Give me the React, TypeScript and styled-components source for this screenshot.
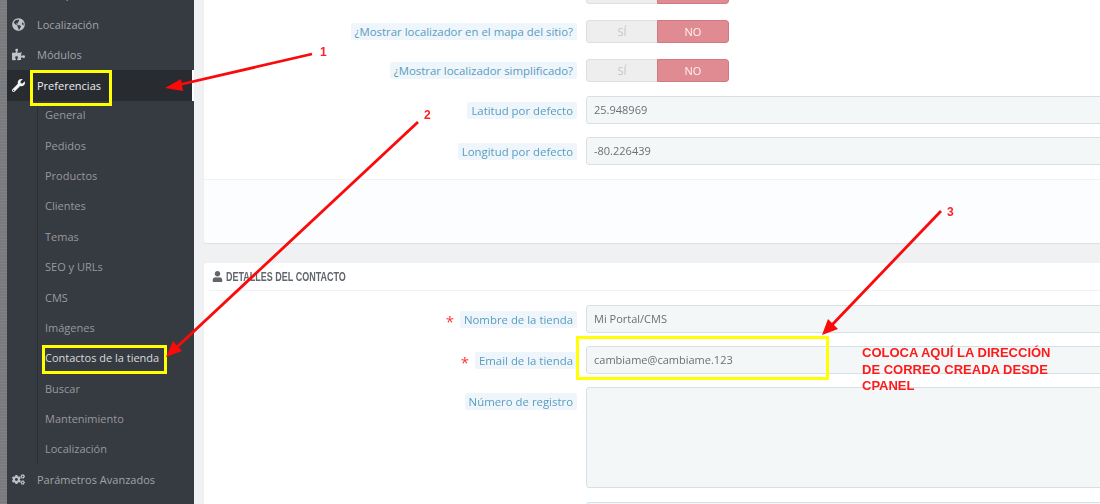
import React from 'react';
import styled, { createGlobalStyle } from 'styled-components';
import { FaCogs, FaGlobeAmericas, FaPuzzlePiece, FaTruck, FaUser, FaWrench } from 'react-icons/fa';

const Global = createGlobalStyle`
  html, body { margin: 0; padding: 0; width: 1100px; height: 504px; overflow: hidden; background: #eff1f2; }
  * { box-sizing: border-box; }
`;
const Page = styled.div`
  position: relative; display: flex; width: 1100px; height: 504px; overflow: hidden;
  font-family: "Open Sans", "Liberation Sans", sans-serif; font-size: 11px; filter: blur(0.45px);
`;
const Strip = styled.div`
  flex: 0 0 7px;
  background: repeating-linear-gradient(0deg, #7f8184 0 1px, #797b7e 1px 3px);
`;
const Sidebar = styled.nav`
  flex: 0 0 187px; background: #363a41; overflow: hidden; margin-right: 10px;
`;
const MainList = styled.div`
  margin-top: -21.5px; display: flex; flex-direction: column;
`;
const MenuItem = styled.div<{ $active?: boolean }>`
  position: relative; height: 30.5px; display: flex; align-items: center; gap: 0;
  background: ${p => (p.$active ? '#282b30' : 'transparent')};
  color: ${p => (p.$active ? '#eceef0' : '#a0a4a9')};
  ${p => p.$active && 'box-shadow: inset -2px 0 0 #fff;'}
`;
const IconBox = styled.span<{ $active?: boolean }>`
  flex: 0 0 30px; display: flex; justify-content: center; padding-right: 8px; font-size: 13px;
  color: ${p => (p.$active ? '#f4f4f4' : '#bfc2c6')};
`;
const SubList = styled.div`
  margin-left: 30px; padding-left: 7px; margin-top: -1px; border-left: 1px solid #2c2f35;
  display: flex; flex-direction: column; height: 365px;
`;
const SubItem = styled.div<{ $active?: boolean }>`
  flex: 0 0 30.4px; display: flex; align-items: center; white-space: nowrap;
  color: ${p => (p.$active ? '#d8dade' : '#96999e')};
`;
const Content = styled.main`
  flex: 1; min-width: 0; display: flex; flex-direction: column; gap: 20px;
`;
const Card = styled.section`
  background: #fff; margin-right: -20px; border-radius: 3px 0 0 3px;
  box-shadow: 0 1px 1px #dcdfe1;
`;
const TopCard = styled(Card)`
  margin-top: -20px; flex: 0 0 263px; display: flex; flex-direction: column;
`;
const TopFields = styled.div`
  flex: 1; display: flex; flex-direction: column; padding-top: 1px;
`;
const Footer = styled.div`
  flex: 0 0 64px; background: #fcfdfe; border-top: 1px solid #f1f3f5; border-radius: 0 0 0 3px;
`;
const ContactCard = styled(Card)`
  flex: 1; display: flex; flex-direction: column;
`;
const CardHeader = styled.h3`
  margin: 0 0 0 5px; height: 28px; display: flex; align-items: center; gap: 3px; padding-left: 3px;
  border-bottom: 1px solid #f0f2f3; color: #62666b;
  font: bold 12.5px "Liberation Sans", sans-serif; text-transform: uppercase;
`;
const HeaderText = styled.span`
  display: inline-block; white-space: nowrap; transform: scaleX(0.72); transform-origin: left center;
`;
const ContactFields = styled.div`
  padding-top: 14px; display: flex; flex-direction: column;
`;
const Row = styled.div<{ $h: number; $mb: number; $top?: boolean }>`
  display: grid; grid-template-columns: 373px 1fr; column-gap: 9px; height: ${p => p.$h}px;
  margin-bottom: ${p => p.$mb}px; align-items: ${p => (p.$top ? 'start' : 'center')};
`;
const LabelCell = styled.div<{ $top?: boolean }>`
  display: flex; justify-content: flex-end; align-items: center; gap: 6px;
  ${p => p.$top && 'padding-top: 6px;'}
`;
const Label = styled.span`
  background: #eef6fb; color: #5b9bbf; padding: 1px 4px; border-radius: 2px; white-space: nowrap;
  line-height: 15px; font-size: 11.4px;
`;
const Star = styled.span`
  color: #f33; font-size: 15px; line-height: 10px; padding-top: 3px;
`;
const Toggle = styled.div`
  width: 143px; height: 23px; display: flex; border-radius: 3px; overflow: hidden; font-size: 11px;
`;
const ToggleOff = styled.span`
  flex: 1; display: flex; align-items: center; justify-content: center;
  background: #eeeeee; border: 1px solid #dedfe0; border-right: 0; border-radius: 3px 0 0 3px; color: #c3c5c7;
`;
const ToggleOn = styled.span`
  flex: 1; display: flex; align-items: center; justify-content: center;
  background: #e08a92; border: 1px solid #cf7a83; border-radius: 0 3px 3px 0; color: #fdf3f4;
`;
const Input = styled.div<{ $h?: number }>`
  height: ${p => p.$h ?? 28}px; background: #f4f7f8; border: 1px solid #d9e0e4; border-radius: 3px 0 0 3px;
  display: flex; align-items: flex-start; padding: 6px 7px; color: #6c6f73; line-height: 14px;
`;
const Overlay = styled.svg`
  position: absolute; left: 0; top: 0; width: 1100px; height: 504px; pointer-events: none;
`;
const YellowBox = styled.div<{ $x: number; $y: number; $w: number; $h: number }>`
  position: absolute; left: ${p => p.$x}px; top: ${p => p.$y}px; width: ${p => p.$w}px; height: ${p => p.$h}px;
  border: 3px solid #ffff00;
`;
const Note = styled.div`
  position: absolute; left: 862px; top: 345px; width: 210px;
  font: bold 13px/16.7px "Liberation Sans", sans-serif; color: #ff1a1a;
`;
const Num = styled.span<{ $x: number; $y: number }>`
  position: absolute; left: ${p => p.$x}px; top: ${p => p.$y}px;
  font: bold 12px/14px "Liberation Sans", sans-serif; color: #ff2020;
`;

const subs = ['General', 'Pedidos', 'Productos', 'Clientes', 'Temas', 'SEO y URLs', 'CMS', 'Imágenes', 'Contactos de la tienda', 'Buscar', 'Mantenimiento', 'Localización'];

const Arrow = ({ d, head }: { d: string; head: string }) => (
  <>
    <path d={d} stroke="#fa0a0a" strokeWidth={2.8} fill="none" />
    <path d={head} fill="#fa0a0a" />
  </>
);

const LabelledToggle = ({ text, mb }: { text?: string; mb: number }) => (
  <Row $h={23} $mb={mb}>
    <LabelCell>{text && <Label>{text}</Label>}</LabelCell>
    <Toggle><ToggleOff>SÍ</ToggleOff><ToggleOn>NO</ToggleOn></Toggle>
  </Row>
);

export default function App() {
  return (
    <Page>
      <Global />
      <Strip />
      <Sidebar>
        <MainList>
          <MenuItem><IconBox><FaTruck /></IconBox>Transporte</MenuItem>
          <MenuItem><IconBox><FaGlobeAmericas /></IconBox>Localización</MenuItem>
          <MenuItem><IconBox><FaPuzzlePiece /></IconBox>Módulos</MenuItem>
          <MenuItem $active><IconBox $active><FaWrench /></IconBox>Preferencias</MenuItem>
          <SubList>
            {subs.map((s, i) => <SubItem key={i} $active={i === 8}>{s}</SubItem>)}
          </SubList>
          <MenuItem><IconBox><FaCogs /></IconBox>Parámetros Avanzados</MenuItem>
        </MainList>
      </Sidebar>
      <Content>
        <TopCard>
          <TopFields>
            <LabelledToggle mb={16} />
            <LabelledToggle text="¿Mostrar localizador en el mapa del sitio?" mb={16} />
            <LabelledToggle text="¿Mostrar localizador simplificado?" mb={14} />
            <Row $h={28} $mb={13}><LabelCell><Label>Latitud por defecto</Label></LabelCell><Input>25.948969</Input></Row>
            <Row $h={28} $mb={0}><LabelCell><Label>Longitud por defecto</Label></LabelCell><Input>-80.226439</Input></Row>
          </TopFields>
          <Footer />
        </TopCard>
        <ContactCard>
          <CardHeader><FaUser size={11} /><HeaderText>Detalles del contacto</HeaderText></CardHeader>
          <ContactFields>
            <Row $h={28} $mb={13}><LabelCell><Star>*</Star><Label>Nombre de la tienda</Label></LabelCell><Input>Mi Portal/CMS</Input></Row>
            <Row $h={28} $mb={13}><LabelCell><Star>*</Star><Label>Email de la tienda</Label></LabelCell><Input>cambiame@cambiame.123</Input></Row>
            <Row $h={101} $mb={14} $top><LabelCell $top><Label>Número de registro</Label></LabelCell><Input $h={101} /></Row>
            <Row $h={28} $mb={0}><LabelCell /><Input /></Row>
          </ContactFields>
        </ContactCard>
      </Content>
      <YellowBox $x={30} $y={70} $w={82} $h={36} />
      <YellowBox $x={42} $y={345} $w={125} $h={29} />
      <YellowBox $x={576} $y={336} $w={253} $h={44} />
      <Overlay viewBox="0 0 1100 504">
        <Arrow d="M312 54 L178 85" head="M165 88 L181 79 L183 91 Z" />
        <Arrow d="M418 122 L176 348" head="M166 357 L173 341 L182 351 Z" />
        <Arrow d="M941 211 L830 327" head="M822 335 L828 319 L838 329 Z" />
      </Overlay>
      <Num $x={320} $y={45}>1</Num>
      <Num $x={424} $y={108}>2</Num>
      <Num $x={947} $y={205}>3</Num>
      <Note>COLOCA AQUÍ LA DIRECCIÓN<br />DE CORREO CREADA DESDE<br />CPANEL</Note>
    </Page>
  );
}
